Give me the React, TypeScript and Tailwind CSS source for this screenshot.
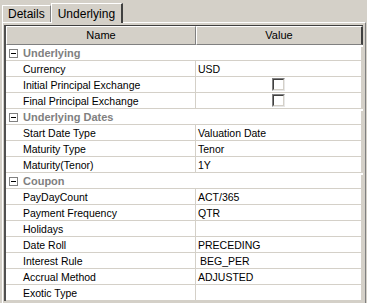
import React from "react";

type Row =
  | { kind: "group"; label: string }
  | { kind: "text"; label: string; value?: string; indent?: boolean }
  | { kind: "check"; label: string };

const rows: Row[] = [
  { kind: "group", label: "Underlying" },
  { kind: "text", label: "Currency", value: "USD" },
  { kind: "check", label: "Initial Principal Exchange" },
  { kind: "check", label: "Final Principal Exchange" },
  { kind: "group", label: "Underlying Dates" },
  { kind: "text", label: "Start Date Type", value: "Valuation Date" },
  { kind: "text", label: "Maturity Type", value: "Tenor" },
  { kind: "text", label: "Maturity(Tenor)", value: "1Y" },
  { kind: "group", label: "Coupon" },
  { kind: "text", label: "PayDayCount", value: "ACT/365" },
  { kind: "text", label: "Payment Frequency", value: "QTR" },
  { kind: "text", label: "Holidays" },
  { kind: "text", label: "Date Roll", value: "PRECEDING" },
  { kind: "text", label: "Interest Rule", value: "BEG_PER", indent: true },
  { kind: "text", label: "Accrual Method", value: "ADJUSTED" },
  { kind: "text", label: "Exotic Type" },
];

function MinusBox() {
  return (
    <span className="w-[9px] h-[9px] border border-[#808080] bg-white flex items-center justify-center">
      <span className="w-[5px] h-px bg-black" />
    </span>
  );
}

function CheckBox() {
  return (
    <span className="w-[13px] h-[13px] border-t border-l border-[#808080] border-r border-b border-r-[#e8e8e8] border-b-[#e8e8e8] bg-white block">
      <span className="block w-full h-full border-t border-l border-[#404040] border-r border-b border-r-[#d4d0c8] border-b-[#d4d0c8]" />
    </span>
  );
}

export default function App() {
  return (
    <div
      className="w-[367px] h-[303px] bg-[#d4d0c8] overflow-hidden text-[10.5px] text-black"
      style={{ fontFamily: '"Liberation Sans", Arial, sans-serif' }}
    >
      {/* tabs */}
      <div className="h-[22px] flex items-end pl-[2px]">
        <div className="h-[17px] px-[5px] flex items-center border-t border-l border-white border-r border-r-[#808080] text-[12px]">
          Details
        </div>
        <div className="h-[20px] -mb-px px-[6px] flex items-center border-t border-l border-white border-r-2 border-r-[#404040] bg-[#d4d0c8] relative z-10 text-[12px]">
          Underlying
        </div>
      </div>

      {/* panel */}
      <div className="h-[281px] ml-[2px] mr-[1px] border-t border-l border-white border-r border-r-[#808080] pt-[2px] pl-px pr-[2px]">
        <div className="border-t border-l-2 border-[#404040] border-l-[#505050] bg-white">
          {/* header */}
          <div className="flex h-[19px] bg-[#d4d0c8] text-[11px]">
            <div className="w-[190px] flex items-center justify-center border-t border-l border-white border-r border-b border-r-[#808080] border-b-[#808080]">
              Name
            </div>
            <div className="flex-1 flex items-center justify-center border-t border-l border-white border-r-2 border-b border-r-[#404040] border-b-[#808080]">
              Value
            </div>
          </div>

          {rows.map((r, i) => (
            <div key={i} className="flex h-[16px] pt-[2px] border-b border-[#d4d0c8]">
              {r.kind === "group" ? (
                <div className="flex-1 flex items-center pl-[3px] gap-[5px] border-r-2 border-[#d4d0c8] text-[11px]">
                  <MinusBox />
                  <span className="font-bold text-[#808080]">{r.label}</span>
                </div>
              ) : (
                <>
                  <div className="w-[190px] flex items-center pl-[17px] border-r border-[#d4d0c8] -mt-[2px]">
                    <span className="pt-[2px]">{r.label}</span>
                  </div>
                  <div
                    className={`flex-1 flex items-center border-r-2 border-[#d4d0c8] -mt-[2px] ${
                      r.kind === "check" ? "justify-center" : r.kind === "text" && r.indent ? "pl-[4px]" : "pl-[2px]"
                    }`}
                  >
                    {r.kind === "check" ? <CheckBox /> : <span className="pt-[2px]">{r.value}</span>}
                  </div>
                </>
              )}
            </div>
          ))}
        </div>
      </div>
    </div>
  );
}
